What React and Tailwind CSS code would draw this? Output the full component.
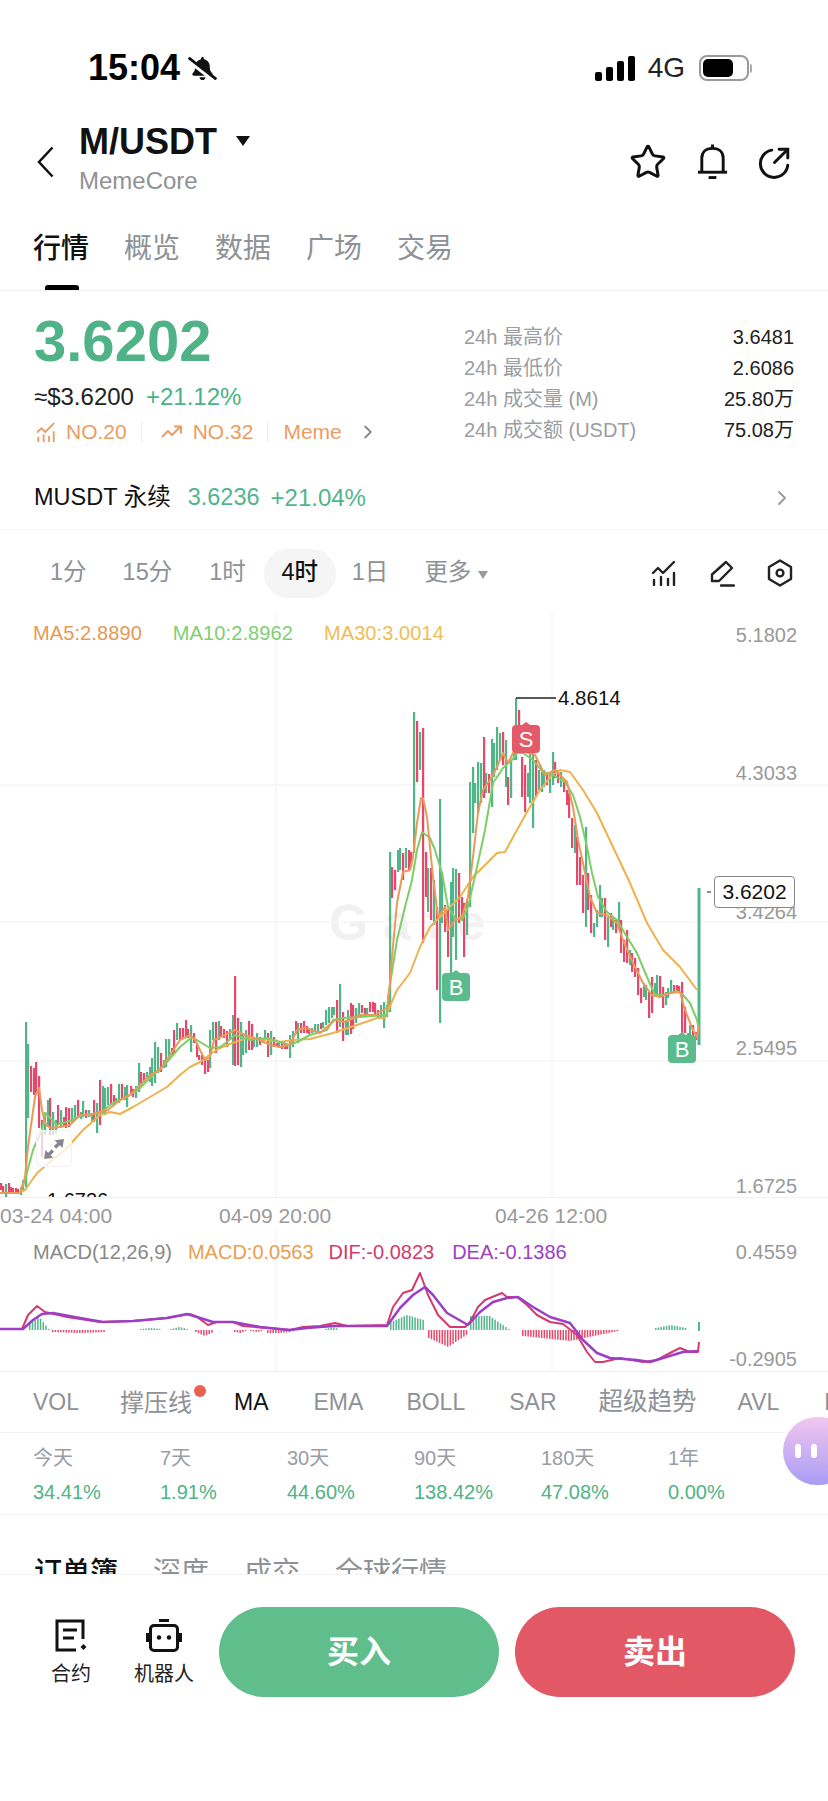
import { ChevronRight, Star } from "lucide-react";
import { FaBellSlash } from "react-icons/fa";

const GREEN = "#52b58a";
const RED = "#e6486b";

// [x, top, bottom, isGreen] traced in page coordinates
const candles = [
  [1,1183,1190,0],[3,1186,1192,0],[6,1184,1197,1],[9,1183,1193,0],[11,1187,1193,0],[13,1188,1193,0],[16,1188,1193,0],[18,1189,1193,0],[21,1187,1195,1],[23,1180,1190,1],
  [26,1022,1187,1],[28,1044,1118,1],[31,1066,1092,0],[34,1068,1095,0],[36,1062,1093,0],[39,1076,1128,0],[42,1120,1157,0],[45,1112,1135,1],[48,1100,1127,1],[50,1098,1135,0],
  [53,1112,1135,1],[56,1120,1133,1],[58,1105,1125,0],[61,1110,1127,1],[64,1117,1127,0],[66,1107,1128,0],[69,1108,1127,0],[72,1108,1123,1],[75,1105,1120,1],[78,1100,1118,0],
  [81,1112,1119,1],[83,1101,1117,1],[86,1110,1118,0],[89,1110,1117,1],[92,1113,1122,1],[94,1100,1122,0],[97,1103,1133,1],[100,1080,1125,0],[103,1086,1115,1],[105,1088,1115,1],
  [108,1087,1105,1],[111,1084,1105,0],[114,1095,1105,0],[116,1098,1103,1],[119,1084,1103,1],[122,1084,1100,0],[125,1087,1100,1],[127,1085,1107,1],[131,1086,1095,0],[133,1089,1097,0],
  [136,1086,1098,1],[139,1063,1092,1],[141,1072,1085,0],[144,1073,1082,0],[147,1072,1078,1],[150,1067,1082,1],[152,1058,1086,1],[155,1042,1083,1],[158,1047,1073,1],[161,1053,1072,0],
  [164,1060,1068,1],[166,1039,1067,1],[169,1039,1059,1],[172,1048,1055,0],[174,1030,1053,0],[177,1023,1040,1],[180,1028,1040,0],[183,1028,1038,0],[186,1020,1038,0],[188,1029,1038,0],
  [191,1025,1052,1],[194,1033,1043,0],[197,1043,1057,0],[199,1055,1060,0],[202,1055,1065,0],[205,1057,1074,0],[208,1060,1072,0],[210,1030,1068,1],[213,1022,1040,1],[216,1022,1053,0],
  [219,1021,1040,1],[221,1026,1037,0],[224,1029,1038,0],[227,1031,1047,0],[230,1029,1040,1],[233,1015,1065,1],[235,976,1066,0],[238,1018,1065,0],[241,1022,1067,1],[243,1035,1055,1],
  [246,1030,1053,1],[249,1021,1050,0],[252,1024,1050,0],[254,1038,1047,1],[257,1033,1047,1],[260,1037,1045,0],[263,1038,1043,1],[265,1030,1038,1],[268,1033,1057,0],[271,1031,1055,1],
  [274,1037,1047,0],[277,1043,1047,0],[279,1043,1048,1],[282,1043,1049,0],[285,1043,1049,0],[287,1045,1049,0],[290,1035,1058,1],[293,1031,1047,1],[296,1021,1034,0],[298,1023,1043,1],
  [301,1023,1033,0],[304,1021,1033,0],[307,1026,1033,0],[309,1028,1034,0],[312,1028,1033,1],[315,1024,1032,1],[318,1024,1032,1],[321,1023,1029,0],[323,1022,1028,1],[326,1010,1025,1],
  [329,1007,1023,1],[332,1007,1018,1],[334,1007,1015,1],[337,1000,1033,0],[340,984,1027,1],[343,1012,1041,0],[346,1020,1035,1],[348,1010,1035,1],[351,1003,1034,0],[353,1005,1029,0],
  [356,1008,1023,1],[359,1003,1017,1],[362,1005,1013,0],[365,1008,1015,0],[367,1008,1015,1],[370,1002,1012,0],[373,1002,1012,0],[375,1003,1015,0],[378,1010,1017,0],[381,1005,1018,1],
  [384,1002,1028,1],[387,1005,1017,1],[390,852,1012,1],[392,867,898,0],[395,870,890,0],[398,850,872,1],[400,848,870,1],[403,853,880,0],[406,848,868,1],[409,850,870,0],
  [411,852,867,0],[414,712,853,1],[417,721,782,0],[420,732,770,1],[423,728,943,0],[426,852,897,0],[428,868,912,1],[431,868,920,0],[434,880,925,1],[437,907,990,0],
  [440,799,1023,1],[442,872,923,1],[445,905,932,0],[448,910,957,0],[451,882,973,1],[453,868,937,1],[456,869,960,1],[459,873,923,0],[462,897,920,0],[464,903,957,0],
  [467,900,935,1],[470,782,907,1],[473,767,833,1],[475,783,803,1],[478,762,813,1],[481,763,803,1],[484,737,798,0],[486,773,793,1],[489,774,793,0],[492,739,807,1],
  [494,743,777,1],[497,727,770,1],[500,733,760,1],[503,732,765,0],[506,740,787,1],[508,777,805,0],[511,760,798,1],[514,748,760,1],[516,698,760,1],[519,710,750,0],
  [522,757,797,0],[525,765,812,0],[528,773,797,1],[530,753,803,1],[533,753,828,1],[536,760,797,0],[539,770,790,1],[542,772,792,1],[544,770,787,1],[547,773,785,0],
  [550,773,793,1],[553,752,785,1],[555,762,778,0],[558,770,783,0],[561,772,787,1],[564,780,792,0],[567,790,805,0],[569,793,818,0],[572,818,848,0],[575,825,853,1],
  [577,837,885,0],[580,857,885,0],[583,875,913,0],[586,827,927,1],[588,873,910,0],[591,895,933,0],[594,923,937,1],[597,910,927,1],[600,885,917,1],[602,898,917,1],
  [605,898,940,0],[608,917,947,1],[611,913,927,0],[613,918,930,1],[616,920,933,0],[619,902,930,1],[621,920,953,0],[624,940,962,0],[627,930,963,0],[630,950,965,1],
  [632,953,972,0],[635,958,977,0],[638,968,995,0],[641,988,1003,0],[644,983,997,1],[646,985,1000,1],[649,992,1018,0],[652,977,1013,0],[655,983,997,1],[657,975,995,1],
  [660,976,997,0],[663,987,1008,0],[666,992,1005,1],[668,988,998,1],[671,980,993,1],[674,985,992,0],[677,985,992,0],[679,986,992,0],[682,982,1033,0],[685,1007,1033,0],
  [688,1033,1040,1],[690,1025,1043,1],[693,1025,1037,0],[696,1032,1040,0],
];

const ma5 = "0,1193 20,1193 25,1177 28,1147 35,1097 39,1088 42,1110 45,1123 50,1128 60,1127 70,1125 80,1115 90,1115 100,1112 108,1110 120,1100 130,1095 140,1085 150,1075 160,1070 170,1055 180,1040 190,1035 195,1040 200,1050 205,1060 210,1057 214,1040 225,1035 235,1030 245,1035 260,1040 270,1045 280,1047 290,1045 297,1030 305,1028 320,1033 335,1020 345,1022 360,1015 375,1015 388,1007 392,957 397,903 403,872 410,870 413,857 417,823 421,798 423,798 427,817 430,847 433,877 438,917 445,907 448,930 455,920 462,917 468,897 473,857 478,813 483,790 490,780 497,767 503,753 508,763 513,753 520,745 525,752 535,755 545,775 555,770 567,782 573,807 578,840 583,863 590,897 597,913 607,915 617,923 623,940 633,963 643,983 652,995 660,997 670,993 680,992 685,1010 693,1030 697,1037 699,1025";
const ma10 = "0,1193 20,1193 25,1180 33,1150 42,1130 45,1113 57,1125 72,1120 83,1115 100,1113 113,1103 127,1097 140,1088 153,1075 167,1062 180,1047 192,1037 200,1042 210,1048 220,1047 227,1042 235,1035 250,1040 267,1038 290,1045 297,1042 310,1035 327,1030 333,1020 343,1018 360,1017 373,1016 387,1015 388,997 397,940 405,907 412,880 417,850 422,832 430,838 435,850 442,873 448,907 455,918 462,920 468,907 477,867 485,830 493,783 503,768 512,760 517,753 523,753 533,760 543,772 553,775 565,782 573,795 580,817 587,847 592,873 598,897 607,912 617,920 627,937 637,953 647,977 655,995 663,995 677,991 683,995 690,1003 697,1020 699,1030";
const ma30 = "0,1193 20,1193 25,1190 37,1173 50,1162 67,1148 83,1130 100,1115 110,1112 120,1114 133,1107 150,1097 167,1087 180,1075 190,1067 200,1062 212,1053 220,1048 235,1042 247,1038 267,1040 280,1042 293,1040 310,1039 333,1033 357,1025 377,1018 385,1018 397,990 410,973 420,947 430,927 447,910 460,897 473,877 487,863 497,853 505,852 517,830 527,812 540,790 552,775 560,770 570,772 583,790 597,813 613,847 630,883 647,923 663,950 680,967 697,990";

const dif = "0,1329 22,1329 28,1315 37,1306 45,1312 67,1317 100,1322 133,1321 167,1318 190,1314 197,1317 208,1325 217,1322 233,1322 243,1326 267,1328 290,1330 303,1327 320,1326 335,1323 347,1326 387,1325 393,1307 403,1293 412,1290 420,1273 428,1295 438,1315 450,1327 465,1327 470,1322 478,1307 485,1300 502,1293 507,1297 517,1297 527,1305 537,1315 550,1322 563,1324 577,1335 587,1352 595,1362 603,1362 620,1358 643,1362 657,1360 670,1353 680,1348 690,1352 698,1352 699,1342";
const dea = "0,1329 23,1329 33,1320 42,1314 53,1313 80,1318 103,1322 133,1321 167,1318 187,1314 197,1317 213,1322 233,1322 260,1327 290,1330 307,1328 333,1326 347,1326 387,1326 400,1308 413,1295 425,1287 433,1295 447,1313 468,1325 480,1312 493,1302 507,1298 518,1297 533,1307 550,1317 570,1323 583,1340 597,1353 610,1358 637,1360 650,1362 663,1358 683,1352 698,1351";

// macd bars: [x from, x to, height at start, height at peak, height at end]
const histRanges = [
  [29,48,6,13,1],[52,105,-2,-3,-2],[140,160,1,2,1],[170,187,1,3,1],[195,213,-2,-6,-2],
  [234,245,-2,-3,-1],[250,262,-1,-2,-1],[267,290,-3,-3,-2],[325,338,1,3,1],
  [390,423,8,15,10],[428,467,-8,-17,-4],[470,508,14,14,1],[522,617,-6,-11,-1],[655,685,2,5,2],
];
const histBars = [];
histRanges.forEach(([from, to, a, b, c]) => {
  const mid = (from + to) / 2;
  for (let x = from; x <= to; x += 2.7) {
    const h = x < mid ? a + ((b - a) * (x - from)) / (mid - from) : b + ((c - b) * (x - mid)) / (to - mid);
    histBars.push([x, h]);
  }
});

const priceLabels = [
  ["5.1802", 23],
  ["4.3033", 161],
  ["3.4264", 300],
  ["2.5495", 436],
  ["1.6725", 574],
];

function StatusBar() {
  return (
    <div className="h-[112px] pt-[44px]">
      <div className="h-[48px] flex items-center justify-between pl-[88px] pr-[76px]">
        <div className="flex items-center gap-[8px]">
          <span className="text-[36px] font-bold text-black">15:04</span>
          <FaBellSlash size={29} color="#111" />
        </div>
        <div className="flex items-center">
          <div className="flex items-end gap-[4px] h-[25px]">
            <div className="w-[7px] h-[9px] rounded-[2px] bg-black" />
            <div className="w-[7px] h-[14px] rounded-[2px] bg-black" />
            <div className="w-[7px] h-[20px] rounded-[2px] bg-black" />
            <div className="w-[7px] h-[25px] rounded-[2px] bg-black" />
          </div>
          <span className="ml-[13px] text-[28px] font-medium text-[#222]">4G</span>
          <div className="ml-[14px] flex items-center">
            <div className="w-[50px] h-[26px] rounded-[8px] border-2 border-[#9a9a9a] p-[2px]">
              <div className="w-[30px] h-full rounded-[5px] bg-black" />
            </div>
            <div className="w-[2px] h-[9px] ml-[1px] rounded-r bg-[#aaa]" />
          </div>
        </div>
      </div>
    </div>
  );
}

function Header() {
  return (
    <div className="h-[100px] flex items-center justify-between pl-[37px] pr-[37px]">
      <div className="flex items-center">
        <svg width="17" height="32" viewBox="0 0 17 32" fill="none" stroke="#111" strokeWidth="2.500">
          <path d="M15.500 1.500L2 16l13.500 14.500" />
        </svg>
        <div className="ml-[25px] -mt-[3px]">
          <div className="flex items-center h-[40px]">
            <span className="text-[36px] font-bold text-[#111]">M/USDT</span>
            <div className="ml-[19px] -mt-[2px] w-0 h-0 border-x-[7px] border-x-transparent border-t-[10px] border-t-[#111]" />
          </div>
          <div className="h-[38px] flex items-center text-[24px] text-[#8f9296]">MemeCore</div>
        </div>
      </div>
      <div className="flex items-center gap-[28px]">
        <Star size={38} strokeWidth={1.9} color="#111" />
        <svg width="35" height="38" viewBox="0 0 36 38" fill="none" stroke="#111" strokeWidth="3">
          <path d="M7 29V15C7 9 11 5 18 5s11 4 11 10v14" />
          <path d="M3 29.500h30" />
          <path d="M18 1v4" />
          <path d="M14 35h8" />
        </svg>
        <svg width="33" height="33" viewBox="0 0 36 36" fill="none" stroke="#111" strokeWidth="3.200" strokeLinecap="round">
          <path d="M15 4.500A15 15 0 1 0 32.500 21" />
          <path d="M18 18L32 4" />
          <path d="M23 3.500h9.500V13" />
        </svg>
      </div>
    </div>
  );
}

function Tabs() {
  return (
    <div className="relative h-[79px] pb-[5px] border-b border-[#f0f0f0] flex items-center gap-[35px] pl-[33px] text-[28px] text-[#8e9195]">
      <span className="font-medium text-[#111]">行情</span>
      <span>概览</span>
      <span>数据</span>
      <span>广场</span>
      <span>交易</span>
      <div className="absolute left-[45px] bottom-0 w-[34px] h-[5px] rounded-t-[3px] bg-black" />
    </div>
  );
}

function MiniBars({ color, size = 20 }) {
  return (
    <svg width={size} height={size} viewBox="0 0 26 26" fill="none" stroke={color} strokeWidth="2.400" strokeLinecap="round" strokeLinejoin="round">
      <path d="M2 13l5-5 5 5L23 2" />
      <path d="M3 25v-5M10 25v-8M17 25v-6M23 25V13" />
    </svg>
  );
}

function PriceBlock() {
  const rows = [
    ["24h 最高价", "3.6481"],
    ["24h 最低价", "2.6086"],
    ["24h 成交量 (M)", "25.80万"],
    ["24h 成交额 (USDT)", "75.08万"],
  ];
  return (
    <div className="h-[179px] flex justify-between pl-[34px] pr-[34px]">
      <div className="pt-[21px]">
        <div className="text-[58px] leading-[58px] font-bold text-[#4fb387]">3.6202</div>
        <div className="mt-[10px] h-[34px] flex items-center text-[24px] gap-[12px]">
          <span className="text-[#222]">≈$3.6200</span>
          <span className="text-[#49b287]">+21.12%</span>
        </div>
        <div className="mt-[3px] h-[30px] flex items-center text-[21px] text-[#ec9c62]">
          <span className="ml-[2px]"><MiniBars color="#ec9c62" /></span>
          <span className="ml-[10px]">NO.20</span>
          <div className="ml-[14px] w-px h-[20px] bg-[#f0e8e0]" />
          <svg className="ml-[19px]" width="21" height="14" viewBox="0 0 21 14" fill="none" stroke="#ec9c62" strokeWidth="2" strokeLinejoin="round">
            <path d="M1 12l6-6 4 4 8-8" />
            <path d="M13 1.500h7v7" />
          </svg>
          <span className="ml-[11px]">NO.32</span>
          <div className="ml-[14px] w-px h-[20px] bg-[#f0e8e0]" />
          <span className="ml-[15px]">Meme</span>
          <ChevronRight size={22} color="#888" className="ml-[15px]" />
        </div>
      </div>
      <div className="w-[330px] pt-[30px]">
        {rows.map((row) => (
          <div key={row[0]} className="h-[31px] flex items-center justify-between text-[20px]">
            <span className="text-[#9a9da1]">{row[0]}</span>
            <span className="text-[#222]">{row[1]}</span>
          </div>
        ))}
      </div>
    </div>
  );
}

function PerpRow() {
  return (
    <div className="h-[60px] pb-[3px] border-b border-[#f5f5f5] flex items-center justify-between pl-[34px] pr-[34px] text-[23.500px]">
      <div className="flex items-center">
        <span className="text-[#111]">MUSDT 永续</span>
        <span className="ml-[17px] text-[#52b58a]">3.6236</span>
        <span className="ml-[11px] text-[24px] text-[#52b58a]">+21.04%</span>
      </div>
      <ChevronRight size={24} color="#999" strokeWidth={1.8} />
    </div>
  );
}

function TimeRow() {
  return (
    <div className="h-[82px] pt-[4px] flex items-center justify-between pr-[35px] text-[23.500px] text-[#8e9195]">
      <div className="flex items-center pl-[50px]">
        <span>1分</span>
        <span className="ml-[36px]">15分</span>
        <span className="ml-[37px]">1时</span>
        <span className="ml-[18px] w-[72px] h-[49px] rounded-full bg-[#f5f5f5] flex items-center justify-center font-medium text-[#111]">4时</span>
        <span className="ml-[16px]">1日</span>
        <span className="ml-[36px]">更多</span>
        <div className="ml-[7px] mt-[3px] w-0 h-0 border-x-[5px] border-x-transparent border-t-[8px] border-t-[#999]" />
      </div>
      <div className="flex items-center gap-[32px]">
        <MiniBars color="#222" size={26} />
        <svg width="26" height="27" viewBox="0 0 26 27" fill="none" stroke="#222" strokeWidth="2.400" strokeLinejoin="round" strokeLinecap="round">
          <path d="M17 2l6 6L10 21H3v-6.500z" />
          <path d="M12 25.500h13" />
        </svg>
        <svg width="26" height="28" viewBox="0 0 26 28" fill="none" stroke="#222" strokeWidth="2.400" strokeLinejoin="round">
          <path d="M13 1.500l11 6.500v12l-11 6.500L2 20V8z" />
          <circle cx="13" cy="14" r="3.400" />
        </svg>
      </div>
    </div>
  );
}

function Badge({ label, color, className }) {
  return (
    <div className={`absolute w-[28px] h-[28px] rounded-[4px] flex items-center justify-center text-[22px] text-white ${className}`} style={{ backgroundColor: color }}>
      {label}
      <div className="absolute left-[10px] -top-[3px] w-0 h-0 border-x-[4px] border-x-transparent border-b-[3px]" style={{ borderBottomColor: color }} />
    </div>
  );
}

function KlineChart() {
  return (
    <div className="relative h-[586px] overflow-hidden border-b border-[#f0f0f0]">
      <div className="absolute left-[329px] top-[286px] text-[50px] leading-[50px] font-bold tracking-[15px] text-[#f1f1f1]">Gate</div>
      <svg className="absolute inset-0" width="828" height="586" viewBox="0 612 828 586">
        {[785, 922, 1061].map((y) => (
          <line key={y} x1="0" x2="828" y1={y} y2={y} stroke="#f6f6f6" strokeWidth="1.500" />
        ))}
        {[276, 552].map((x) => (
          <line key={x} x1={x} x2={x} y1="612" y2="1198" stroke="#f6f6f6" strokeWidth="1.500" />
        ))}
        {candles.map(([x, top, bottom, up]) => (
          <rect key={x} x={x - 1} y={top} width="2.200" height={bottom - top} fill={up ? GREEN : RED} />
        ))}
        <rect x="697.500" y="888" width="3" height="157" fill={GREEN} />
        <polyline points={ma30} fill="none" stroke="#eeb24c" strokeWidth="2" strokeLinejoin="round" />
        <polyline points={ma10} fill="none" stroke="#7dce68" strokeWidth="2" strokeLinejoin="round" />
        <polyline points={ma5} fill="none" stroke="#e99a58" strokeWidth="2" strokeLinejoin="round" />
        <line x1="516" x2="556" y1="698" y2="698" stroke="#222" strokeWidth="1.500" />
        <line x1="707" x2="711" y1="892" y2="892" stroke="#666" strokeWidth="1.500" />
      </svg>

      <div className="absolute left-[33px] top-[11px] flex items-center gap-[31px] text-[20px] tracking-[0.1px] leading-[20px]">
        <span className="text-[#e59a55]">MA5:2.8890</span>
        <span className="text-[#7ed070]">MA10:2.8962</span>
        <span className="text-[#f0bd55]">MA30:3.0014</span>
      </div>

      {priceLabels.map(([label, top]) => (
        <div key={label} className="absolute right-[31px] text-[20px] leading-[24px] text-[#999]" style={{ top: top - 12 }}>
          {label}
        </div>
      ))}

      <div className="absolute left-[558px] top-[74px] text-[20.500px] leading-[24px] font-medium text-[#111]">4.8614</div>
      <Badge label="S" color="#e35a68" className="left-[512px] top-[113px]" />
      <Badge label="B" color="#5abb8c" className="left-[442px] top-[361px]" />
      <Badge label="B" color="#5abb8c" className="left-[668px] top-[423px]" />

      <div className="absolute left-[714px] top-[264px] w-[81px] h-[32px] rounded-[4px] border border-[#888] bg-white flex items-center justify-center text-[21px] text-[#111]">3.6202</div>

      <div className="absolute left-[36px] top-[518px] w-[36px] h-[37px] rounded-[5px] border border-[#f2f2f2] bg-white/75 flex items-center justify-center">
        <svg width="22" height="22" viewBox="0 0 22 22" fill="#85858d">
          <path d="M21 1l-1.500 9-2.700-2.700-3.600 3.400-2.400-2.400 3.500-3.500L11.600 2.200z" />
          <path d="M1 21l1.500-9 2.700 2.700 3.500-3.400 2.400 2.400-3.500 3.500 2.700 2.600z" />
        </svg>
      </div>

      <div className="absolute left-[47px] top-[576px] text-[20px] leading-[24px] font-medium text-[#111]">1.6726</div>
    </div>
  );
}

function TimeAxis() {
  return (
    <div className="relative h-[30px] text-[21px] leading-[30px] text-[#999]">
      <span className="absolute left-0 top-[3px]">03-24 04:00</span>
      <span className="absolute left-[219px] top-[3px]">04-09 20:00</span>
      <span className="absolute left-[495px] top-[3px]">04-26 12:00</span>
    </div>
  );
}

function MacdPanel() {
  return (
    <div className="relative h-[144px] border-b border-[#f0f0f0] overflow-hidden">
      <svg className="absolute inset-0" width="828" height="144" viewBox="0 1228 828 144">
        {[276, 552].map((x) => (
          <line key={x} x1={x} x2={x} y1="1228" y2="1372" stroke="#f6f6f6" strokeWidth="1.500" />
        ))}
        {histBars.map(([x, h]) => (
          <rect key={x} x={x} y={h > 0 ? 1330 - h : 1330} width="1.500" height={Math.abs(h)} fill={h > 0 ? GREEN : RED} />
        ))}
        <rect x="698" y="1322" width="2" height="9" fill={GREEN} />
        <polyline points={dif} fill="none" stroke="#d43a6c" strokeWidth="2" strokeLinejoin="round" />
        <polyline points={dea} fill="none" stroke="#9c3fc6" strokeWidth="2.500" strokeLinejoin="round" />
      </svg>
      <div className="absolute left-[33px] top-[12px] flex items-center text-[20px] leading-[24px]">
        <span className="text-[#888]">MACD(12,26,9)</span>
        <span className="ml-[16px] text-[#e8a050]">MACD:0.0563</span>
        <span className="ml-[15px] text-[#d43a6c]">DIF:-0.0823</span>
        <span className="ml-[18px] text-[#9c3fc6]">DEA:-0.1386</span>
      </div>
      <div className="absolute right-[31px] top-[12px] text-[20px] leading-[24px] text-[#999]">0.4559</div>
      <div className="absolute right-[31px] top-[119px] text-[20px] leading-[24px] text-[#999]">-0.2905</div>
    </div>
  );
}

function IndicatorRow() {
  return (
    <div className="h-[61px] pt-[1px] border-b border-[#f3f3f3] flex items-center pl-[33px] text-[23px] text-[#8e9195] whitespace-nowrap overflow-hidden">
      <span>VOL</span>
      <span className="relative ml-[41px] text-[24px]">
        撑压线
        <div className="absolute -right-[14px] top-[0px] w-[12px] h-[12px] rounded-full bg-[#e8604f]" />
      </span>
      <span className="ml-[42px] text-[#111]">MA</span>
      <span className="ml-[45px]">EMA</span>
      <span className="ml-[43px]">BOLL</span>
      <span className="ml-[44px]">SAR</span>
      <span className="ml-[42px] text-[24.500px]">超级趋势</span>
      <span className="ml-[41px]">AVL</span>
      <span className="ml-[45px]">B</span>
    </div>
  );
}

function ReturnsRow() {
  const items = [
    ["今天", "34.41%"],
    ["7天", "1.91%"],
    ["30天", "44.60%"],
    ["90天", "138.42%"],
    ["180天", "47.08%"],
    ["1年", "0.00%"],
  ];
  return (
    <div className="h-[82px] border-b border-[#f3f3f3] pl-[33px] flex">
      {items.map((item) => (
        <div key={item[0]} className="w-[127px] shrink-0 pt-[13px]">
          <div className="h-[24px] leading-[24px] text-[20px] text-[#9a9da1]">{item[0]}</div>
          <div className="mt-[10px] h-[24px] leading-[24px] text-[20px] text-[#4fb387]">{item[1]}</div>
        </div>
      ))}
    </div>
  );
}

function OrderTabs() {
  return (
    <div className="h-[59px] overflow-hidden pt-[41px] pl-[34px] flex gap-[35px] text-[28px] leading-[34px] text-[#8e9195]">
      <span className="font-medium text-[#111]">订单簿</span>
      <span>深度</span>
      <span>成交</span>
      <span>全球行情</span>
    </div>
  );
}

function BottomBar() {
  return (
    <div className="relative bg-white border-t border-[#f3f3f3] h-[227px] pt-[32px] pl-[51px] pr-[33px] flex items-start">
      <div className="w-[40px] flex flex-col items-center pt-[12px]">
        <svg width="32" height="33" viewBox="0 0 32 33" fill="none" stroke="#111" strokeWidth="3">
          <path d="M28 20V2H2v29h19" />
          <path d="M8 11h14M8 19h11" />
          <path d="M28.500 25l3 3-3 3-3-3z" fill="#111" stroke="none" />
        </svg>
        <div className="mt-[10px] text-[20px] leading-[24px] text-[#222]">合约</div>
      </div>
      <div className="ml-[42px] w-[62px] flex flex-col items-center pt-[12px]">
        <svg width="36" height="33" viewBox="0 0 36 33" fill="none" stroke="#111" strokeWidth="3">
          <path d="M13 1.500h10" />
          <rect x="4.500" y="6.500" width="27" height="25" rx="3.500" />
          <path d="M1.500 14v9M34.500 14v9" />
          <circle cx="13" cy="18.500" r="2.200" fill="#111" stroke="none" />
          <circle cx="23" cy="18.500" r="2.200" fill="#111" stroke="none" />
        </svg>
        <div className="mt-[10px] text-[20px] leading-[24px] text-[#222]">机器人</div>
      </div>
      <button className="ml-[24px] w-[280px] h-[90px] rounded-[45px] bg-[#5fbe8b] text-white text-[32px] font-bold">买入</button>
      <button className="ml-[16px] w-[280px] h-[90px] rounded-[45px] bg-[#e35865] text-white text-[32px] font-bold">卖出</button>
    </div>
  );
}

export default function App() {
  return (
    <div className="relative w-[828px] h-[1801px] overflow-hidden bg-white font-['Liberation_Sans','Noto_Sans_CJK_SC',sans-serif]">
      <StatusBar />
      <Header />
      <Tabs />
      <PriceBlock />
      <PerpRow />
      <TimeRow />
      <KlineChart />
      <TimeAxis />
      <MacdPanel />
      <IndicatorRow />
      <ReturnsRow />
      <OrderTabs />
      <BottomBar />

      <div className="absolute left-[783px] top-[1417px] w-[70px] h-[68px] rounded-[34px] bg-linear-to-b from-[#f3c6ee] to-[#a99cf5] flex items-center gap-[10px] pl-[12px]">
        <div className="w-[6px] h-[14px] rounded-full bg-white" />
        <div className="w-[6px] h-[14px] rounded-full bg-white" />
      </div>
    </div>
  );
}
